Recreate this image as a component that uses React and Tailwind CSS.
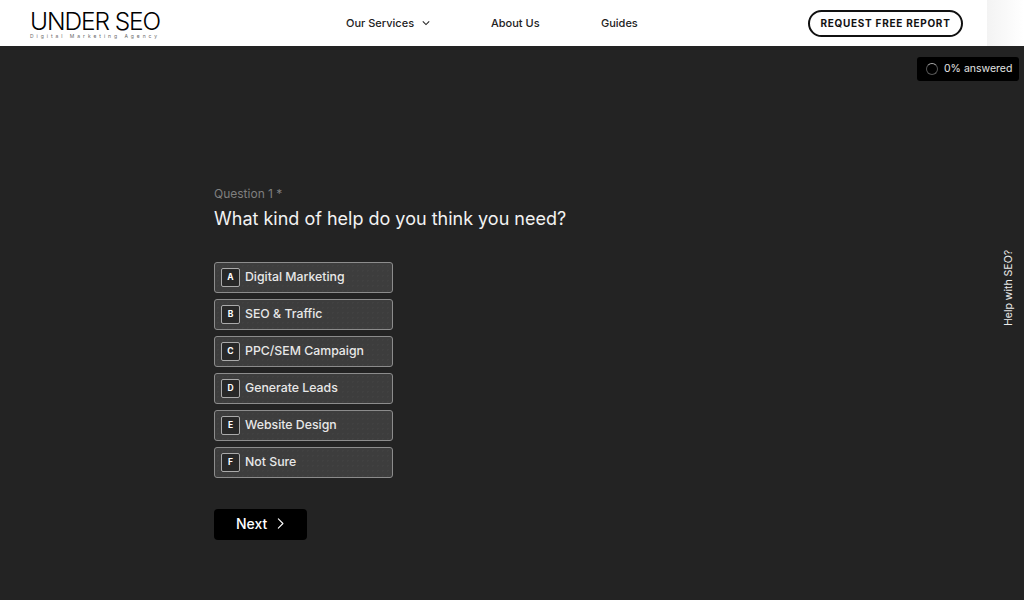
const options = [
  ["A", "Digital Marketing"],
  ["B", "SEO & Traffic"],
  ["C", "PPC/SEM Campaign"],
  ["D", "Generate Leads"],
  ["E", "Website Design"],
  ["F", "Not Sure"],
];

function Chevron({ className, w = 2 }) {
  return (
    <svg viewBox="0 0 24 24" fill="none" stroke="currentColor" strokeWidth={w} strokeLinecap="round" strokeLinejoin="round" className={className}>
      <path d="M8 3.5 16.5 12 8 20.5" />
    </svg>
  );
}

function Down({ className }) {
  return (
    <svg viewBox="0 0 10 6" fill="none" stroke="currentColor" strokeWidth="1.3" className={className}>
      <path d="M1 1l4 4 4-4" />
    </svg>
  );
}

export default function App() {
  return (
    <div className="relative h-[600px] w-[1024px] overflow-hidden bg-[#232323] font-['Inter',sans-serif]">
      <header className="relative flex h-[46px] w-[987px] items-center bg-white text-[#222]">
        <div className="ml-[30px] flex w-[130px] flex-col pt-[1px]">
          <div className="h-[24px] whitespace-nowrap text-[24.5px] font-light leading-[24px] tracking-[-1.1px] text-black">UNDER SEO</div>
          <div className="whitespace-nowrap text-[5px] leading-[6px] tracking-[2.95px] text-[#666]">Digital Marketing Agency</div>
        </div>
        <nav className="ml-[186px] flex items-center text-[11px] font-medium">
          <span className="flex w-[145px] items-center">Our Services<Down className="ml-[8px] h-[6px] w-[8px]" /></span>
          <span className="w-[110px]">About Us</span>
          <span>Guides</span>
        </nav>
        <button className="ml-auto mr-[24px] h-[27px] w-[155px] rounded-full border-2 border-[#111] pt-[1px] text-[10px] font-bold tracking-[0.72px] text-[#111]">REQUEST FREE REPORT</button>
      </header>
      <div className="absolute right-0 top-0 h-[46px] w-[37px] bg-gradient-to-r from-[#f3f3f3] to-white" />

      <div className="absolute right-[5px] top-[57px] flex h-[24px] w-[102px] items-center rounded-[3px] bg-black text-white">
        <span className="ml-[9px] h-[12px] w-[12px] rounded-full border border-[#555] border-t-[#aaa]" />
        <span className="ml-[6px] text-[10.5px] text-[#e4e4e4]">0% answered</span>
      </div>

      <main className="ml-[214px] pt-[141px] text-white">
        <div className="text-[12px] leading-[14px] text-[#7f7f7f]">Question 1 *</div>
        <h1 className="mt-[6px] text-[18px] font-normal leading-[24px] text-[#f2f2f2]">What kind of help do you think you need?</h1>
        <div className="mt-[31px] flex w-[179px] flex-col gap-[6px]">
          {options.map(([k, label]) => (
            <div key={k} className="flex h-[31px] items-center rounded-[3px] border border-[#8c8c8c] bg-[#3d3d3d] bg-[radial-gradient(#414141_1px,transparent_1px)] bg-[length:5px_5px] pl-[6px]">
              <span className="flex h-[19px] w-[19px] items-center justify-center rounded-[2px] border border-[#aaaaaa] bg-[#282828] text-[8.5px] font-bold text-white">{k}</span>
              <span className="ml-[5px] text-[12.3px] font-medium text-[#e8e8e8]">{label}</span>
            </div>
          ))}
        </div>
        <button className="mt-[31px] flex h-[31px] w-[93px] items-center rounded-[4px] bg-black pb-[2px] pl-[22px] text-[14px] font-medium text-white">
          Next
          <Chevron className="ml-[7px] h-[13px] w-[13px]" w={2} />
        </button>
      </main>

      <div className="absolute right-[9px] top-[248px] h-[78px] rotate-180 whitespace-nowrap text-[10.5px] leading-[12px] text-[#ececec] [writing-mode:vertical-rl]">Help with SEO?</div>
    </div>
  );
}
